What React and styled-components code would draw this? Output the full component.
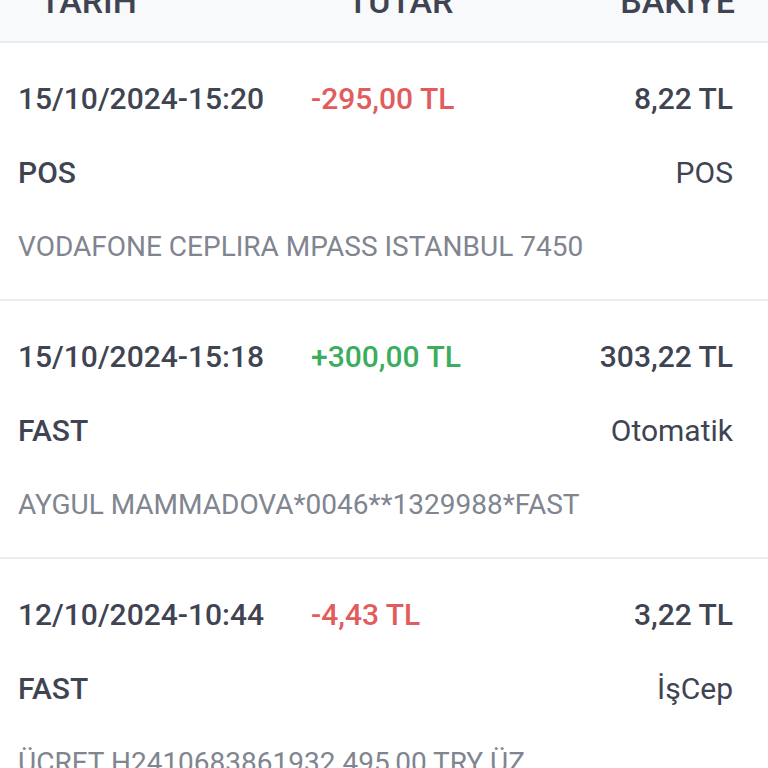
import React from "react";
import styled, { createGlobalStyle } from "styled-components";

const GlobalStyle = createGlobalStyle`
  body {
    margin: 0;
    background: #ffffff;
    font-family: Roboto, "Noto Sans", sans-serif;
  }
`;

const Page = styled.div`
  width: 768px;
  overflow: hidden;
`;

const Header = styled.div`
  display: grid;
  grid-template-columns: 1fr 1fr 1fr;
  margin-top: -40px;
  padding: 22px 33px 21px 40px;
  background: #f8f9fb;
  border-bottom: 2px solid #e8eaee;
  font-size: 34px;
  line-height: 38px;
  font-weight: 500;
  color: #3f4452;
`;

const HeadCell = styled.div`
  text-align: ${(p) => p.align || "left"};
  padding-left: ${(p) => (p.align === "center" ? "26px" : "0")};
`;

const Row = styled.div`
  display: flex;
  flex-direction: column;
  gap: 40px;
  padding: 39px 35px 35px 18px;
  border-bottom: 2px solid #ececef;
`;

const Line = styled.div`
  display: grid;
  grid-template-columns: ${(p) => (p.three ? "293px 1fr auto" : "1fr auto")};
  align-items: center;
  font-size: 30px;
  line-height: 34px;
  color: #3f4452;
  white-space: nowrap;
`;

const DateText = styled.div`
  font-weight: 500;
`;

const Amount = styled.div`
  font-weight: 500;
  color: ${(p) => (p.positive ? "#3aae5c" : "#e25c5c")};
`;

const Balance = styled.div`
  font-weight: 500;
  text-align: right;
`;

const TypeText = styled.div`
  font-weight: ${(p) => (p.right ? 400 : 500)};
  text-align: ${(p) => (p.right ? "right" : "left")};
`;

const Desc = styled.div`
  font-size: 28px;
  line-height: 34px;
  color: #80858f;
  white-space: nowrap;
`;

const rows = [
  {
    date: "15/10/2024-15:20",
    amount: "-295,00 TL",
    positive: false,
    balance: "8,22 TL",
    type: "POS",
    channel: "POS",
    desc: "VODAFONE CEPLIRA MPASS ISTANBUL 7450",
  },
  {
    date: "15/10/2024-15:18",
    amount: "+300,00 TL",
    positive: true,
    balance: "303,22 TL",
    type: "FAST",
    channel: "Otomatik",
    desc: "AYGUL MAMMADOVA*0046**1329988*FAST",
  },
  {
    date: "12/10/2024-10:44",
    amount: "-4,43 TL",
    positive: false,
    balance: "3,22 TL",
    type: "FAST",
    channel: "İşCep",
    desc: "ÜCRET H2410683861932 495,00 TRY ÜZ",
  },
];

const App = () => {
  return (
    <Page>
      <GlobalStyle />
      <Header>
        <HeadCell>TARİH</HeadCell>
        <HeadCell align="center">TUTAR</HeadCell>
        <HeadCell align="right">BAKİYE</HeadCell>
      </Header>
      {rows.map((r, i) => (
        <Row key={i}>
          <Line three>
            <DateText>{r.date}</DateText>
            <Amount positive={r.positive}>{r.amount}</Amount>
            <Balance>{r.balance}</Balance>
          </Line>
          <Line>
            <TypeText>{r.type}</TypeText>
            <TypeText right>{r.channel}</TypeText>
          </Line>
          <Desc>{r.desc}</Desc>
        </Row>
      ))}
    </Page>
  );
};

export default App;
